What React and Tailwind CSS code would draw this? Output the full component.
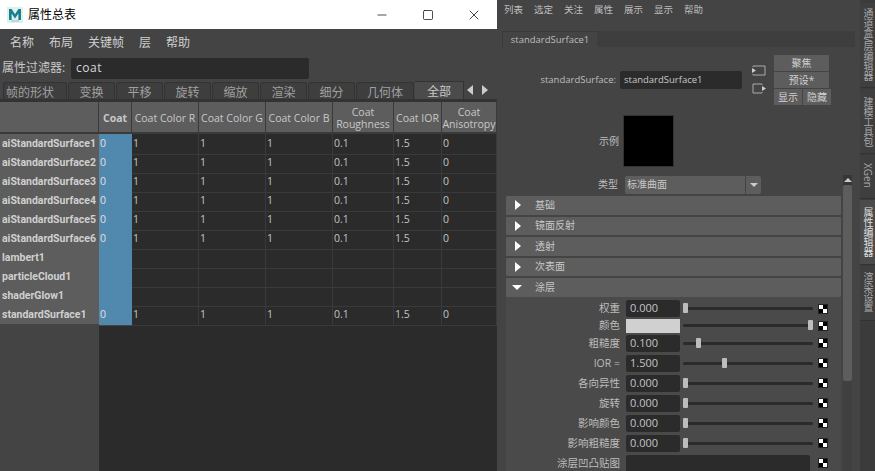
import { Minus, Square, X } from "lucide-react";

const FONT = "font-['Open_Sans','Noto_Sans_CJK_SC',sans-serif]";

const menuLeft = ["名称", "布局", "关键帧", "层", "帮助"];
const menuRight = ["列表", "选定", "关注", "属性", "展示", "显示", "帮助"];
const tabs = [
  ["帧的形状", "w-[64px] text-left pl-[2px]"],
  ["变换", "w-[47px] text-center"],
  ["平移", "w-[47px] text-center"],
  ["旋转", "w-[47px] text-center"],
  ["缩放", "w-[47px] text-center"],
  ["渲染", "w-[47px] text-center"],
  ["细分", "w-[47px] text-center"],
  ["几何体", "w-[58px] text-center"],
];
const columns = "grid-cols-[99px_33px_67px_67px_67px_61px_48px_55px]";
const headers = ["Coat", "Coat Color R", "Coat Color G", "Coat Color B", "Coat Roughness", "Coat IOR", "Coat Anisotropy"];
const rows = [
  ["aiStandardSurface1", true],
  ["aiStandardSurface2", true],
  ["aiStandardSurface3", true],
  ["aiStandardSurface4", true],
  ["aiStandardSurface5", true],
  ["aiStandardSurface6", true],
  ["lambert1", false],
  ["particleCloud1", false],
  ["shaderGlow1", false],
  ["standardSurface1", true],
];
const values = ["0", "1", "1", "1", "0.1", "1.5", "0"];
const sections = ["基础", "镜面反射", "透射", "次表面"];
const attrs = [
  { label: "权重", value: "0.000", pos: 0, h: "h-[19px]" },
  { label: "颜色", color: true, pos: 100, h: "h-[15px]" },
  { label: "粗糙度", value: "0.100", pos: 10, h: "h-[20px]" },
  { label: "IOR =", value: "1.500", pos: 30, h: "h-[20px]" },
  { label: "各向异性", value: "0.000", pos: 0, h: "h-[20px]" },
  { label: "旋转", value: "0.000", pos: 0, h: "h-[20px]" },
  { label: "影响颜色", value: "0.000", pos: 0, h: "h-[20px]" },
  { label: "影响粗糙度", value: "0.000", pos: 0, h: "h-[20px]" },
];
const sideTabs = [
  ["通道盒/层编辑器", "h-[85px] pt-[5px]", false],
  ["建模工具包", "h-[65px] pt-[8px]", false],
  ["XGen", "h-[44px] pt-[8px]", false],
  ["属性编辑器", "h-[65px] pt-[7px]", true],
  ["渲染设置", "h-[55px] pt-[6px]", false],
];

function MayaLogo() {
  return (
    <svg width="16" height="16" viewBox="0 0 16 16" className="shrink-0">
      <rect width="16" height="16" fill="#dff0ee" />
      <path d="M2 13V2h2.6L8 7.2 11.4 2H14v11h-2.6V6.6L8 11.4 4.6 6.6V13z" fill="#16808c" />
      <rect x="4" y="13.4" width="8" height="1.2" fill="#9cc" />
    </svg>
  );
}

function Checker() {
  return (
    <div className="w-[10px] h-[10px] grid grid-cols-2 shrink-0 border border-[#222]">
      <div className="bg-white" />
      <div className="bg-black" />
      <div className="bg-black" />
      <div className="bg-white" />
    </div>
  );
}

function Slider({ pos }) {
  return (
    <div className="relative w-[130px] h-[3px] bg-[#2b2b2b] rounded-full">
      <div
        className="absolute top-[-4px] w-[5px] h-[10px] bg-[#bdbdbd] rounded-[1px]"
        style={{ left: `${pos}%`, marginLeft: pos === 100 ? -5 : 0 }}
      />
    </div>
  );
}

function AttrRow({ label, value, color, pos, h }) {
  return (
    <div className={`flex items-center ${h} shrink-0`}>
      <div className="w-[120px] pr-[6px] text-right text-[10.5px] text-[#bdbdbd] leading-none">{label}</div>
      {color ? (
        <div className="w-[54px] h-[14px] bg-[#d0d0d0]" />
      ) : (
        <div className="w-[54px] h-[17px] bg-[#2b2b2b] rounded-[2px] px-1 flex items-center text-[11px] text-[#c4c4c4]">
          {value}
        </div>
      )}
      <div className="ml-[2px] w-[136px] flex items-center pl-[1px]">
        <Slider pos={pos} />
      </div>
      <Checker />
    </div>
  );
}

function TriangleRight() {
  return <div className="w-0 h-0 border-y-[5px] border-y-transparent border-l-[6px] border-l-white" />;
}

function TriangleDown() {
  return <div className="w-0 h-0 border-x-[5px] border-x-transparent border-t-[5px] border-t-white" />;
}

function SpreadSheet() {
  return (
    <div className="w-[497px] h-full shrink-0 flex flex-col bg-[#444444] overflow-hidden">
      {/* title bar */}
      <div className="h-[29px] shrink-0 bg-white flex items-center pl-[7px] text-black">
        <MayaLogo />
        <span className="ml-[5px] text-[12px]">属性总表</span>
        <div className="ml-auto flex items-center text-black">
          <div className="w-[46px] flex justify-center"><Minus size={14} strokeWidth={1.2} /></div>
          <div className="w-[46px] flex justify-center"><Square size={12} strokeWidth={1.4} /></div>
          <div className="w-[46px] flex justify-center"><X size={16} strokeWidth={1.1} /></div>
        </div>
      </div>

      {/* menu */}
      <div className="h-[28px] shrink-0 flex items-center pl-[10px] gap-[15px] text-[12px] text-[#d0d0d0]">
        {menuLeft.map((m) => <span key={m}>{m}</span>)}
      </div>

      {/* filter */}
      <div className="h-[22px] shrink-0 flex items-center pl-[2px] text-[12px] text-[#c8c8c8]">
        <span className="w-[69px]">属性过滤器:</span>
        <div className="w-[238px] h-[21px] bg-[#2b2b2b] rounded-[2px] px-[5px] flex items-center text-[#d8d8d8] text-[12px] tracking-[0.5px]">coat</div>
      </div>

      {/* tabs */}
      <div className="h-[18px] mt-[2px] pl-[3px] shrink-0 flex items-end text-[12px] text-[#a0a0a0]">
        <div className="flex items-end overflow-hidden">
          {tabs.map(([t, w]) => (
            <div key={t} className={`${w} h-[17px] shrink-0 mr-[1px] bg-[#3e3e3e] border-t border-x border-[#333] rounded-t-[3px] leading-[19px] whitespace-nowrap overflow-hidden`}>
              {t}
            </div>
          ))}
          <div className="w-[49px] h-[18px] shrink-0 bg-[#4b4b4b] border-t border-r border-[#333] text-center leading-[20px] text-[#c8c8c8] overflow-hidden">全部</div>
        </div>
        <div className="flex items-center gap-[9px] h-[18px] pl-[3px]">
          <div className="w-0 h-0 border-y-[5px] border-y-transparent border-r-[6px] border-r-[#ccc]" />
          <div className="w-0 h-0 border-y-[5px] border-y-transparent border-l-[6px] border-l-[#ccc]" />
        </div>
      </div>

      {/* table */}
      <div className="flex-1 flex flex-col bg-[#2b2b2b] border-t-[3px] border-[#333]">
        <div className={`grid ${columns} h-[32px] shrink-0 border-b-[2px] border-[#3a3a3a] text-[10.5px] text-[#c8c8c8] leading-[12px]`}>
          <div className="bg-[#5d5d5d] border-r border-[#3a3a3a]" />
          {headers.map((h, i) => (
            <div key={h} className={`bg-[#5d5d5d] border-r border-[#3a3a3a] pt-[2px] flex items-center justify-center text-center ${i === 0 ? "font-bold" : ""} whitespace-pre-line`}>
              {h.startsWith("Coat R") || h.startsWith("Coat A") ? h.replace(" ", "\n") : h}
            </div>
          ))}
        </div>
        {rows.map(([name, filled]) => (
          <div key={name} className={`grid ${columns} h-[19px] shrink-0 text-[10.5px] leading-[18px] text-[#c4c4c4]`}>
            <div className="bg-[#5d5d5d] border-b-2 border-[#333] px-[2px] pt-[1px] font-['Roboto'] font-bold text-[10.5px] text-[#d0d0d0] whitespace-nowrap">{name}</div>
            <div className="bg-[#5088ae] border-b border-[#444] px-[1px] text-[#e0e0e0]">{filled ? "0" : ""}</div>
            {values.slice(1).map((v, i) => (
              <div key={i} className="border-r border-b border-[#3a3a3a] px-[1px]">{filled ? v : ""}</div>
            ))}
          </div>
        ))}
        <div className="flex-1 flex">
          <div className="w-[99px] bg-[#444444]" />
        </div>
      </div>
    </div>
  );
}

function AttributeEditor() {
  return (
    <div className="flex-1 h-full flex flex-col bg-[#444444] overflow-hidden">
      <div className="h-[19px] pt-[2px] shrink-0 flex items-center pl-[7px] gap-[11px] text-[9.5px] text-[#bdbdbd]">
        {menuRight.map((m) => <span key={m}>{m}</span>)}
      </div>

      {/* node tabs */}
      <div className="h-[16px] mt-[12px] ml-[5px] mr-[5px] shrink-0 bg-[#3e3e3e] flex">
        <div className="w-[95px] bg-[#444444] border-t border-l border-[#3a3a3a] text-[9.5px] leading-[16px] text-center text-[#bdbdbd]">standardSurface1</div>
      </div>

      {/* node header */}
      <div className="h-[50px] mt-[8px] shrink-0 flex items-start">
        <div className="w-[119px] mt-[17px] text-right text-[9.5px] leading-[16px] text-[#bdbdbd]">standardSurface:</div>
        <div className="ml-[4px] mt-[16px] w-[122px] h-[18px] bg-[#2b2b2b] rounded-[2px] px-1 text-[9.5px] leading-[18px] text-[#c8c8c8]">standardSurface1</div>
        <div className="ml-[10px] mt-[10px] flex flex-col gap-[7px]">
          <svg width="14" height="11" viewBox="0 0 14 11" fill="none">
            <path d="M1 2V1h12v9H1V9" stroke="#aaa" />
            <path d="M0 3l4 2.5L0 8z" fill="#ccc" />
          </svg>
          <svg width="14" height="11" viewBox="0 0 14 11" fill="none">
            <path d="M10 2V1H1v9h9V9" stroke="#aaa" />
            <path d="M10 3l4 2.5L10 8z" fill="#ccc" />
          </svg>
        </div>
        <div className="ml-[8px] flex flex-col gap-[1px] text-[10px] text-[#d0d0d0] text-center leading-[16px]">
          <div className="w-[55px] h-[16px] bg-[#5d5d5d]">聚焦</div>
          <div className="w-[55px] h-[16px] bg-[#5d5d5d]">预设*</div>
          <div className="flex gap-[1px]">
            <div className="w-[28px] h-[16px] bg-[#5d5d5d]">显示</div>
            <div className="w-[28px] h-[16px] bg-[#5d5d5d]">隐藏</div>
          </div>
        </div>
      </div>

      {/* sample swatch */}
      <div className="h-[52px] mt-[10px] shrink-0 flex items-center">
        <div className="w-[122px] text-right text-[10px] text-[#bdbdbd]">示例</div>
        <div className="ml-[4px] w-[51px] h-[52px] bg-black border border-[#333]" />
      </div>

      <div className="flex-1 mt-[8px] flex min-h-0">
        <div className="w-[346px] shrink-0 flex flex-col">
          {/* type */}
          <div className="h-[19px] shrink-0 flex items-center">
            <div className="w-[121px] text-right text-[10px] text-[#bdbdbd]">类型</div>
            <div className="ml-[7px] w-[120px] h-[18px] bg-[#5d5d5d] rounded-l-[2px] px-[2px] text-[10px] leading-[17px] text-[#c8c8c8]">标准曲面</div>
            <div className="ml-[1px] w-[15px] h-[18px] bg-[#5d5d5d] rounded-r-[2px] flex items-center justify-center">
              <div className="w-0 h-0 border-x-[4px] border-x-transparent border-t-[4px] border-t-[#ccc]" />
            </div>
          </div>

          {/* frame layouts */}
          <div className="ml-[9px] mt-[2px] w-[335px] flex flex-col gap-[2px] shrink-0">
            {sections.map((s) => (
              <div key={s} className="h-[18.5px] bg-[#5d5d5d] rounded-[1px] flex items-center text-[10px] text-[#c8c8c8]">
                <div className="w-[29px] pl-[9px]"><TriangleRight /></div>
                {s}
              </div>
            ))}
            <div className="h-[19px] bg-[#5d5d5d] rounded-[1px] flex items-center text-[10px] text-[#c8c8c8]">
              <div className="w-[29px] pl-[6px]"><TriangleDown /></div>
              涂层
            </div>
          </div>

          {/* coat attributes */}
          <div className="ml-[9px] w-[335px] pt-[2px] flex-1 flex flex-col bg-[#4a4a4a] overflow-hidden">
            {attrs.map((a) => <AttrRow key={a.label} {...a} />)}
            <div className="flex items-center h-[20px] shrink-0">
              <div className="w-[120px] pr-[6px] text-right text-[10.5px] text-[#bdbdbd] leading-none">涂层凹凸贴图</div>
              <div className="w-[184px] h-[17px] bg-[#2b2b2b] rounded-[2px]" />
              <div className="ml-[8px]"><Checker /></div>
            </div>
          </div>
        </div>

        {/* scrollbar */}
        <div className="w-[9px] h-full flex flex-col shrink-0 bg-[#404040]">
          <div className="h-[10px] bg-[#363636] flex items-center justify-center shrink-0">
            <div className="w-0 h-0 border-x-[4px] border-x-transparent border-b-[4px] border-b-[#ccc]" />
          </div>
          <div className="h-[196px] bg-[#5d5d5d] rounded-[2px]" />
        </div>
      </div>
    </div>
  );
}

function SideTabs() {
  return (
    <div className="w-[15px] h-full shrink-0 bg-[#3b3b3b] flex flex-col pt-[3px] gap-[1px]">
      {sideTabs.map(([t, h, active]) => (
        <div key={t} className={`${h} w-[15px] shrink-0 ${active ? "bg-[#4b4b4b] text-[#e0e0e0]" : "bg-[#3f3f3f] text-[#a8a8a8]"} border-b border-[#333] text-[10px] leading-[15px] [writing-mode:vertical-rl] whitespace-nowrap overflow-hidden`}>
          {t}
        </div>
      ))}
    </div>
  );
}

export default function App() {
  return (
    <div className={`w-[875px] h-[471px] flex overflow-hidden bg-[#444444] ${FONT}`}>
      <SpreadSheet />
      <AttributeEditor />
      <SideTabs />
    </div>
  );
}
